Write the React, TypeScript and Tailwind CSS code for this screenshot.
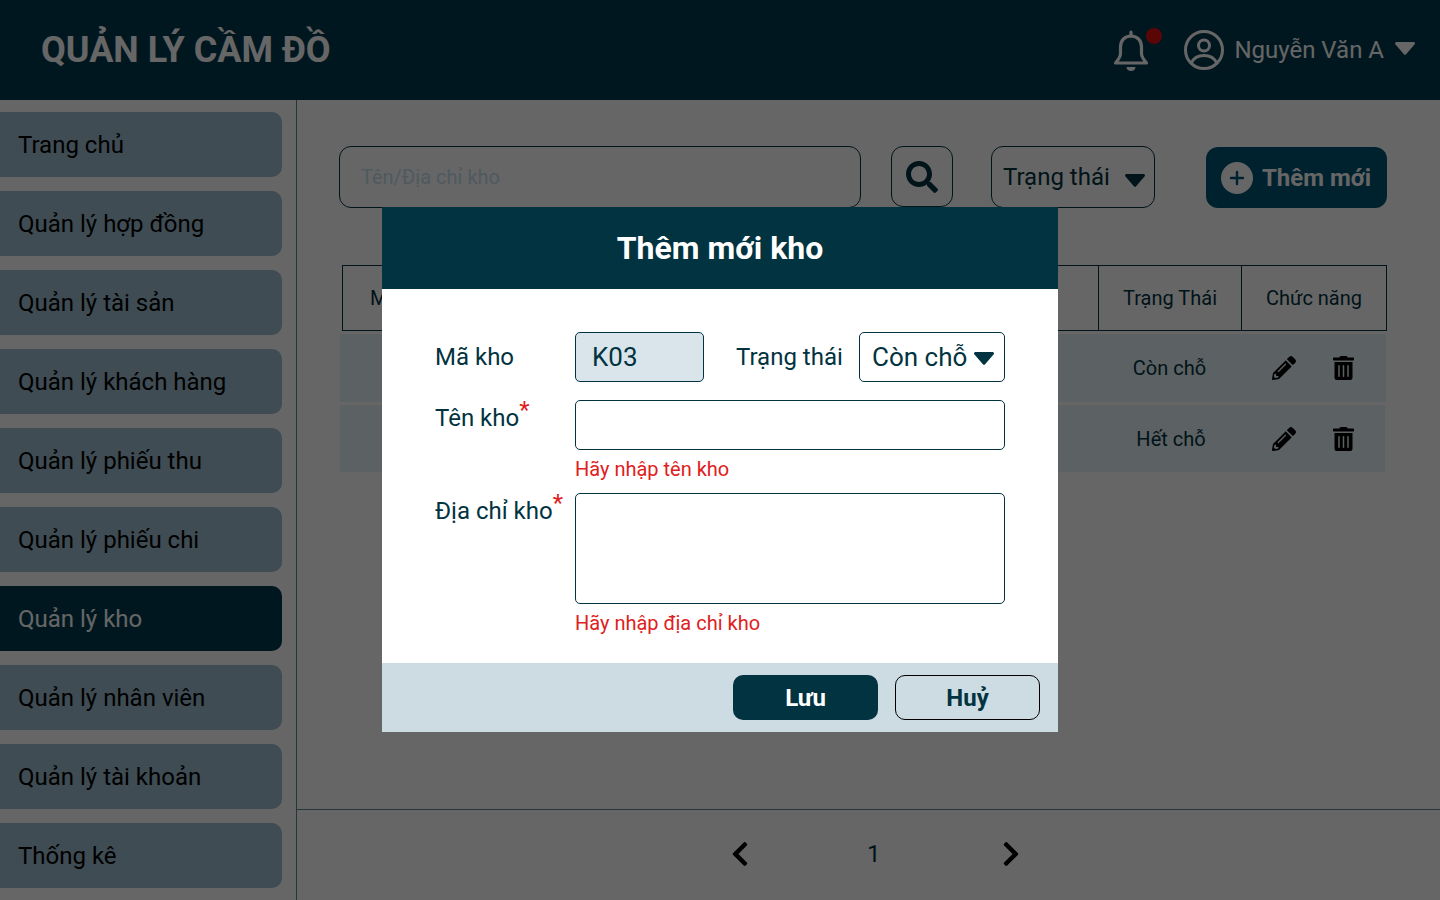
import React from "react";
import { FaSearch, FaPencilAlt, FaTrashAlt, FaChevronLeft, FaChevronRight } from "react-icons/fa";

const menuItems = [
  "Trang chủ",
  "Quản lý hợp đồng",
  "Quản lý tài sản",
  "Quản lý khách hàng",
  "Quản lý phiếu thu",
  "Quản lý phiếu chi",
  "Quản lý kho",
  "Quản lý nhân viên",
  "Quản lý tài khoản",
  "Thống kê",
];

const Caret = ({ className }: { className: string }) => (
  <svg viewBox="0 0 20 13" className={className} fill="currentColor">
    <path d="M1.5 0h17c1.3 0 2 1.5 1 2.500l-8.400 9.800c-.6.7-1.600.7-2.200 0L.5 2.500C-.5 1.500.2 0 1.500 0z" />
  </svg>
);

const Bell = () => (
  <svg viewBox="0 0 36 42" className="h-[42px] w-[36px]" fill="none" stroke="currentColor" strokeWidth="3.200" strokeLinejoin="round">
    <path d="M18 6c-6.500 0-10.500 4.700-10.500 11v6.500c0 3.500-2 6-5 9.500h31c-3-3.500-5-6-5-9.500V17C28.500 10.700 24.500 6 18 6z" />
    <path d="M18 2v4" strokeLinecap="round" />
    <path d="M13.500 37h9c0 2.500-2 4-4.500 4s-4.500-1.500-4.500-4z" fill="currentColor" stroke="none" />
  </svg>
);

const UserCircle = () => (
  <svg viewBox="0 0 40 40" className="h-10 w-10" fill="none" stroke="currentColor" strokeWidth="3">
    <circle cx="20" cy="20" r="18.500" />
    <circle cx="20" cy="15.500" r="5.500" />
    <path d="M7.500 33c2-5 7-7.500 12.500-7.500S30.500 28 32.500 33" />
  </svg>
);

export default function App() {
  return (
    <div className="relative h-[900px] w-[1440px] overflow-hidden bg-white font-['Roboto',sans-serif] text-[#023340]">
      <header className="flex h-[100px] items-center justify-between bg-[#003a4f] pl-[41px] pr-[25px] text-white">
        <h1 className="text-[36px] font-bold">QUẢN LÝ CẦM ĐỒ</h1>
        <div className="flex items-center">
          <div className="relative mr-[35px] mt-[2px]">
            <Bell />
            <span className="absolute -right-[13px] -top-[2px] h-4 w-4 rounded-full bg-[#e01010]" />
          </div>
          <UserCircle />
          <span className="ml-[10px] text-[24px]">Nguyễn Văn A</span>
          <Caret className="ml-[11px] mb-[4px] h-[13px] w-5" />
        </div>
      </header>

      <div className="flex h-[800px]">
        <aside className="flex w-[297px] flex-col gap-[14px] border-r border-[#5f8296] pt-3">
          {menuItems.map((item) => (
            <div
              key={item}
              className={
                item === "Quản lý kho"
                  ? "flex h-[65px] w-[282px] items-center rounded-r-[10px] bg-[#003a4f] pl-[18px] text-[24px] text-white"
                  : "flex h-[65px] w-[282px] items-center rounded-r-[10px] bg-[#9ebecf] pl-[18px] text-[24px] text-black"
              }
            >
              {item}
            </div>
          ))}
        </aside>

        <main className="flex flex-1 flex-col">
          <div className="flex-1 pl-[42px] pt-[46px]">
            <div className="flex items-start">
              <input
                readOnly
                placeholder="Tên/Địa chỉ kho"
                className="h-[62px] w-[522px] rounded-xl border border-[#023340] px-[21px] text-[20px] placeholder:text-[#c5e0ee]"
              />
              <button className="ml-[30px] flex h-[61px] w-[62px] items-center justify-center rounded-xl border border-[#023340]">
                <FaSearch className="h-8 w-8" />
              </button>
              <div className="ml-[38px] flex h-[62px] w-[164px] items-center justify-between rounded-xl border border-[#023340] pl-[11px] pr-[9px] text-[24px]">
                <span>Trạng thái</span>
                <Caret className="mt-[6px] h-[13px] w-5" />
              </div>
              <button className="ml-[51px] mt-[1px] flex h-[61px] w-[181px] items-center rounded-xl bg-[#005473] pl-[15px] text-[24px] font-bold text-white">
                <span className="flex h-8 w-8 items-center justify-center rounded-full bg-white text-[#005473]">
                  <svg viewBox="0 0 16 16" className="h-4 w-4" stroke="currentColor" strokeWidth="2.400" strokeLinecap="round">
                    <path d="M8 2v12M2 8h12" />
                  </svg>
                </span>
                <span className="ml-[9px]">Thêm mới</span>
              </button>
            </div>

            <div className="ml-[3px] mt-[57px] flex h-[66px] w-[1045px] items-center border border-[#023340] text-[20px]">
              <div className="flex-1 pl-[27px]">Mã kho</div>
              <div className="flex h-full w-[143px] items-center justify-center border-l border-[#023340]">Trạng Thái</div>
              <div className="flex h-full w-[145px] items-center justify-center border-l border-[#023340]">Chức năng</div>
            </div>

            <div className="ml-[1px] mt-[3px] flex h-[68px] w-[1046px] items-center bg-[#e6f2f7] text-[20px]">
              <div className="flex-1" />
              <div className="w-[143px] text-center">Còn chỗ</div>
              <div className="flex w-[145px] items-center text-black">
                <FaPencilAlt className="ml-[31px] h-6 w-6" />
                <FaTrashAlt className="ml-[37px] h-6 w-[21px]" />
              </div>
            </div>
            <div className="ml-[1px] mt-[3px] flex h-[67px] w-[1045px] items-center bg-[#e6f2f7] text-[20px]">
              <div className="flex-1" />
              <div className="w-[143px] pl-[3px] text-center">Hết chỗ</div>
              <div className="flex w-[144px] items-center text-black">
                <FaPencilAlt className="ml-[31px] h-6 w-6" />
                <FaTrashAlt className="ml-[37px] h-6 w-[21px]" />
              </div>
            </div>
          </div>

          <div className="flex h-[91px] items-center border-t border-[#5f8296] pb-[2px] text-[24px]">
            <FaChevronLeft className="ml-[434px] h-7 w-[18px] text-black" />
            <span className="ml-[118px]">1</span>
            <FaChevronRight className="ml-[121px] h-7 w-[18px] text-black" />
          </div>
        </main>
      </div>

      <div className="absolute inset-0 flex justify-center bg-black/60 pt-[207px]">
        <div className="flex h-[525px] w-[676px] flex-col bg-white">
          <div className="flex h-[82px] items-center justify-center bg-[#023340] text-[32px] font-bold text-white">
            Thêm mới kho
          </div>

          <div className="flex-1 pl-[53px] pr-[53px] pt-[43px] text-[24px]">
            <div className="flex items-center">
              <label className="w-[140px]">Mã kho</label>
              <div className="flex h-[50px] w-[129px] items-center rounded-[5px] border border-[#023340] bg-[#d9e5eb] pl-4 text-[26px]">
                K03
              </div>
              <label className="ml-[32px] w-[123px]">Trạng thái</label>
              <div className="flex h-[50px] w-[146px] items-center justify-between rounded-[5px] border border-[#023340] pl-3 pr-[10px] text-[26px]">
                <span>Còn chỗ</span>
                <Caret className="mt-[3px] h-[13px] w-5" />
              </div>
            </div>

            <div className="mt-[18px] flex">
              <label className="w-[140px]">
                Tên kho<span className="relative -top-[8px] text-[#e02020]">*</span>
              </label>
              <div>
                <div className="h-[50px] w-[430px] rounded-[5px] border border-[#023340]" />
                <p className="mt-[6px] text-[20px] leading-[26px] text-[#e02020]">Hãy nhập tên kho</p>
              </div>
            </div>

            <div className="mt-[11px] flex">
              <label className="w-[140px]">
                Địa chỉ kho<span className="relative -top-[8px] text-[#e02020]">*</span>
              </label>
              <div>
                <div className="h-[111px] w-[430px] rounded-[5px] border border-[#023340]" />
                <p className="mt-[6px] text-[20px] leading-[26px] text-[#e02020]">Hãy nhập địa chỉ kho</p>
              </div>
            </div>
          </div>

          <div className="flex h-[69px] items-center justify-end gap-[17px] bg-[#cddce3] pr-[18px] text-[24px] font-bold">
            <button className="h-[45px] w-[145px] rounded-[10px] bg-[#023340] text-white">Lưu</button>
            <button className="h-[45px] w-[145px] rounded-[10px] border border-black text-[#023340]">Huỷ</button>
          </div>
        </div>
      </div>
    </div>
  );
}
